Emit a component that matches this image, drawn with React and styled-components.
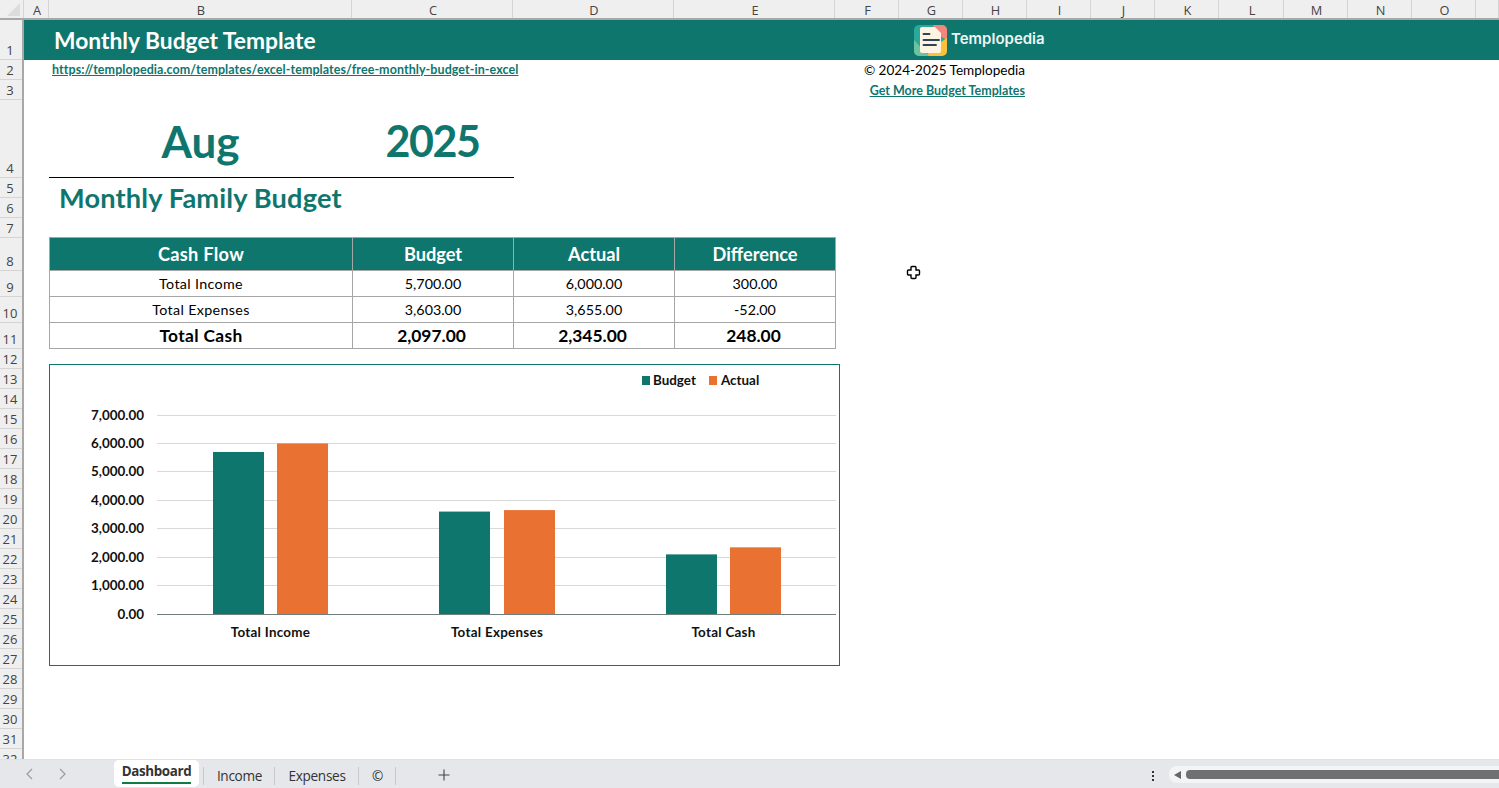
import React from "react";
import styled, { createGlobalStyle } from "styled-components";

const TEAL = "#0f766e";
const ORANGE = "#e97132";
const FONT = `"Lato", "Carlito", "Noto Sans", sans-serif`;

const Global = createGlobalStyle`
  html, body { margin: 0; padding: 0; background: #fff; overflow: hidden; }
  * { box-sizing: border-box; }
`;

const Window = styled.div`
  width: 1499px; height: 788px; display: flex; flex-direction: column;
  overflow: hidden; position: relative; font-family: ${FONT}; color: #000; background: #fff;
`;

/* Column header strip */
const ColBar = styled.div`
  display: flex; height: 20px; flex: none; background: #efefef; border-bottom: 2px solid #a8a8a8;
`;
const Corner = styled.div`
  width: 24px; flex: none; border-right: 1px solid #d4d4d4; position: relative; overflow: hidden;
  &::after {
    content: ""; position: absolute; right: 3px; bottom: 2px; width: 0; height: 0;
    border-style: solid; border-width: 0 0 13px 13px; border-color: transparent transparent #dcdcdc transparent;
  }
`;
const ColCell = styled.div`
  width: ${(p) => p.$w}px; flex: none; border-right: 1px solid #d4d4d4;
  display: flex; align-items: center; justify-content: center;
  font: 400 12.8px "Open Sans", sans-serif; color: #444; padding: 1px 0 0 2px;
`;

const Main = styled.div`
  flex: 1; display: flex; min-height: 0; overflow: hidden;
`;

/* Row header strip */
const RowBar = styled.div`
  width: 24px; flex: none; background: #efefef; border-right: 2px solid #a8a8a8; overflow: hidden;
`;
const RowCell = styled.div`
  height: ${(p) => p.$h}px; border-bottom: 1px solid #d4d4d4;
  display: flex; align-items: flex-end; justify-content: center;
  font: 400 13px "Open Sans", sans-serif; color: #444; line-height: 17px; padding-right: 2px;
`;

/* Sheet */
const Sheet = styled.div`
  flex: 1; display: grid; min-width: 0; align-content: start;
  grid-template-columns: 25px 303px 161px 161px 161px 64px 64px 64px 1fr;
  grid-template-rows: 40px 20px 20px 78px 20px 20px 20px 33px 26px 26px 26px 20px;
`;
const Banner = styled.div`
  grid-column: 1 / -1; grid-row: 1; background: ${TEAL};
`;
const Title = styled.h1`
  grid-column: 2 / span 3; grid-row: 1; margin: 0; padding-left: 5px; align-self: center;
  font: 700 22.8px ${FONT}; color: #fff; white-space: nowrap;
`;
const Logo = styled.div`
  grid-column: 7 / span 3; grid-row: 1; margin-left: 15px; display: flex; align-items: center; gap: 4px;
`;
const LogoText = styled.span`
  font: 600 15px "Inter", sans-serif; color: #eef5f3; letter-spacing: 0; margin-top: -3px;
`;
const UrlLink = styled.a`
  grid-row: 2; grid-column: 2 / span 3; justify-self: start; align-self: center;
  padding: 0 0 2px 3px; white-space: nowrap;
  font: 700 12.5px ${FONT}; letter-spacing: 0.07px; color: ${TEAL}; text-decoration: underline;
`;
const MoreLink = styled.a`
  grid-row: 3; grid-column: 6 / span 3; justify-self: end; align-self: center;
  padding: 0 2px 0 0; white-space: nowrap;
  font: 700 12.5px ${FONT}; color: ${TEAL}; text-decoration: underline;
`;
const Copyright = styled.div`
  grid-column: 6 / span 3; grid-row: 2; justify-self: end; align-self: center; padding: 0 2px 0 0;
  font: 400 13.55px ${FONT}; white-space: nowrap;
`;
const Period = styled.div`
  grid-column: ${(p) => p.$col}; grid-row: 4; justify-self: center; align-self: end;
  font: 700 ${(p) => (p.$digits ? "43px" : "44px")}/64px ${FONT}; color: ${TEAL}; margin-bottom: 5px; white-space: nowrap;
  letter-spacing: ${(p) => (p.$digits ? "-1.4px" : "0")};
`;
const Rule = styled.div`
  grid-column: 2 / span 2; grid-row: 4; align-self: end; height: 1px; background: #000; margin-right: -1px;
`;
const Heading = styled.h2`
  grid-column: 2 / span 3; grid-row: 5 / span 2; margin: 0 0 2px; padding-left: 10px; align-self: center;
  font: 700 27.2px ${FONT}; letter-spacing: 0.15px; color: ${TEAL}; white-space: nowrap;
`;

/* Cash-flow table */
const Table = styled.div`
  grid-column: 2 / span 4; grid-row: 8 / span 4; margin-top: -1px; align-self: start;
  display: grid; grid-template-columns: 303px 161px 161px 161px; grid-template-rows: 33px 26px 26px 26px;
  border-top: 1px solid #a6a6a6; border-left: 1px solid #a6a6a6; width: 787px;
`;
const HeadCell = styled.div`
  background: ${TEAL}; color: #fff; display: flex; align-items: center; justify-content: center;
  font: 700 18.2px ${FONT}; border-right: 1px solid #a6a6a6; border-bottom: 1px solid #a6a6a6;
  letter-spacing: ${(p) => (p.$label ? "0.3px" : "0")};
`;
const Cell = styled.div`
  display: flex; align-items: center; justify-content: center;
  font: 400 14.3px ${FONT};
  letter-spacing: ${(p) => (p.$label ? "0.33px" : "0")};
  border-right: 1px solid #a6a6a6; border-bottom: 1px solid #a6a6a6;
`;
const TotalCell = styled(Cell)`
  font: 700 17.4px ${FONT};
  padding-right: ${(p) => (p.$label ? "0" : "3px")};
`;

/* Chart */
const ChartFrame = styled.div`
  grid-column: 2 / span 5; grid-row: 12; margin-top: 15px; width: 791px; height: 302px;
  border: 1px solid ${TEAL}; background: #fff; align-self: start;
`;
const ChartSvg = styled.svg`
  display: block; width: 789px; height: 300px;
  text { font: 700 13.4px ${FONT}; fill: #111; }
`;
const CategoryLabel = styled.text`
  letter-spacing: 0.28px;
`;

/* Sheet tabs */
const TabBar = styled.div`
  height: 29px; flex: none; background: #e5e7eb; display: flex; align-items: stretch; position: relative;
  border-top: 1px solid #dfe1e5;
`;
const Nav = styled.div`
  width: 114px; flex: none; display: flex; align-items: center; gap: 20px; padding-left: 24px;
`;
const ActiveTab = styled.div`
  width: 85px; flex: none; background: #fff; border-radius: 5px; margin-bottom: 1px; position: relative;
  display: flex; justify-content: center; padding-top: 2px;
  font: 700 13.4px "Open Sans", sans-serif; color: #333; letter-spacing: -0.35px;
  &::after {
    content: ""; position: absolute; left: 8px; right: 8px; bottom: 3px; height: 2px; background: #107c41;
  }
`;
const Tab = styled.div`
  display: flex; align-items: center; justify-content: center; flex: none;
  width: ${(p) => p.$w}px; font: 400 13.6px "Open Sans", sans-serif; color: #333; letter-spacing: -0.3px;
  padding-top: 3px; position: relative;
  &::after {
    content: ""; position: absolute; right: 0; top: 7px; bottom: 3px; width: 1px; background: #c6c8cc;
  }
`;
const Plus = styled.div`
  margin-left: 42px; width: 16px; display: flex; align-items: center; padding-top: 2px;
`;
const BarRight = styled.div`
  margin-left: auto; width: 354px; flex: none; display: flex; align-items: center;
`;
const Dots = styled.div`
  width: 16px; margin-right: 8px; display: flex; flex-direction: column; align-items: center; gap: 2px; padding-top: 3px;
  & i { width: 2px; height: 2px; background: #333; display: block; }
`;
const Track = styled.div`
  flex: 1; height: 17px; margin-top: 1px; background: #f3f4f6; border-radius: 8px 0 0 8px;
  display: flex; align-items: center; padding-left: 5px; gap: 5px;
`;
const ArrowLeft = styled.div`
  width: 0; height: 0; border-style: solid; border-width: 4.5px 7px 4.5px 0;
  border-color: transparent #666 transparent transparent;
`;
const Thumb = styled.div`
  flex: 1; height: 9px; background: #707070; border-radius: 4px 0 0 4px;
`;
const CursorIcon = styled.svg`
  position: absolute; left: 906px; top: 265px; width: 15px; height: 15px;
`;

const columns = [
  ["A", 25], ["B", 303], ["C", 161], ["D", 161], ["E", 161], ["F", 64], ["G", 64], ["H", 64],
  ["I", 64], ["J", 64], ["K", 64], ["L", 65], ["M", 64], ["N", 64], ["O", 64], ["", 23],
];
const rowHeights = { 1: 40, 4: 78, 8: 33, 9: 26, 10: 26, 11: 26 };
const rows = Array.from({ length: 32 }, (_, i) => i + 1);

const flow = [
  ["Total Income", "5,700.00", "6,000.00", "300.00"],
  ["Total Expenses", "3,603.00", "3,655.00", "-52.00"],
];

const Y0 = 249; // baseline of the plot inside the frame's svg
const SCALE = 199 / 7000;
const OX = -50, OY = -365;
const ticks = [7000, 6000, 5000, 4000, 3000, 2000, 1000, 0];
const groups = [
  { name: "Total Income", cx: 270.5, b: 5700, a: 6000, bx: 213, ax: 277 },
  { name: "Total Expenses", cx: 497, b: 3603, a: 3655, bx: 439, ax: 504 },
  { name: "Total Cash", cx: 723.5, b: 2097, a: 2345, bx: 666, ax: 730 },
];
const fmt = (n) => (n === 0 ? "0.00" : n.toLocaleString("en-US") + ".00");

function Chart() {
  return (
    <ChartSvg viewBox="0 0 789 300">
      <rect x={642 + OX} y={376 + OY} width="8" height="9" fill={TEAL} />
      <text x={653 + OX} y={385 + OY}>Budget</text>
      <rect x={709 + OX} y={376 + OY} width="8" height="9" fill={ORANGE} />
      <text x={721 + OX} y={385 + OY}>Actual</text>
      {ticks.map((t) => {
        const y = Y0 - t * SCALE;
        const snapped = Math.floor(y) + 0.5;
        return (
          <g key={t}>
            {t > 0 && <line x1={157 + OX} x2={836 + OX} y1={snapped} y2={snapped} stroke="#d9d9d9" strokeWidth="1" />}
            <text x={144 + OX} y={y + 4.5} textAnchor="end">{fmt(t)}</text>
          </g>
        );
      })}
      {groups.map((g) => (
        <g key={g.name}>
          <rect x={g.bx + OX} y={Y0 - g.b * SCALE} width="51" height={g.b * SCALE} fill={TEAL} />
          <rect x={g.ax + OX} y={Y0 - g.a * SCALE} width="51" height={g.a * SCALE} fill={ORANGE} />
          <CategoryLabel x={g.cx + OX} y={637 + OY} textAnchor="middle">{g.name}</CategoryLabel>
        </g>
      ))}
      <line x1={157 + OX} x2={836 + OX} y1={Y0 + 0.5} y2={Y0 + 0.5} stroke="#6f7f7c" strokeWidth="1" />
    </ChartSvg>
  );
}

function LogoMark() {
  return (
    <svg width="33" height="31" viewBox="0 0 33 31">
      <defs>
        <clipPath id="lg"><rect width="33" height="31" rx="5" /></clipPath>
      </defs>
      <g clipPath="url(#lg)">
        <rect width="33" height="31" fill="#28a99a" />
        <path d="M19 0H33V15L24 10Z" fill="#f4847c" />
        <path d="M33 13V31H11L24 19Z" fill="#fbc13a" />
        <path d="M0 15L15 31H0Z" fill="#6cc3a0" />
      </g>
      <path d="M6 4Q6 2 8 2H21L27 8V26Q27 28 25 28H8Q6 28 6 26Z" fill="#fff4e4" />
      <path d="M9.5 9H15.5M9.5 15H25M9.5 20H22" stroke="#2d4652" strokeWidth="1.9" strokeLinecap="round" />
    </svg>
  );
}

export default function App() {
  return (
    <Window>
      <Global />
      <ColBar>
        <Corner />
        {columns.map(([c, w], i) => <ColCell key={i} $w={w}>{c}</ColCell>)}
      </ColBar>
      <Main>
        <RowBar>
          {rows.map((r) => <RowCell key={r} $h={rowHeights[r] || 20}>{r}</RowCell>)}
        </RowBar>
        <Sheet>
          <Banner />
          <Title>Monthly Budget Template</Title>
          <Logo><LogoMark /><LogoText>Templopedia</LogoText></Logo>
          <UrlLink>https://templopedia.com/templates/excel-templates/free-monthly-budget-in-excel</UrlLink>
          <Copyright>© 2024-2025 Templopedia</Copyright>
          <MoreLink>Get More Budget Templates</MoreLink>
          <Period $col={2}>Aug</Period>
          <Period $col={3} $digits>2025</Period>
          <Rule />
          <Heading>Monthly Family Budget</Heading>
          <Table>
            {["Cash Flow", "Budget", "Actual", "Difference"].map((h, i) => <HeadCell key={h} $label={i === 0}>{h}</HeadCell>)}
            {flow.flat().map((v, i) => <Cell key={i} $label={i % 4 === 0}>{v}</Cell>)}
            {["Total Cash", "2,097.00", "2,345.00", "248.00"].map((v, i) => <TotalCell key={v} $label={i === 0}>{v}</TotalCell>)}
          </Table>
          <ChartFrame><Chart /></ChartFrame>
        </Sheet>
      </Main>
      <TabBar>
        <Nav>
          <svg width="12" height="12" viewBox="0 0 12 12"><path d="M8 1L3 6l5 5" fill="none" stroke="#9a9ca0" strokeWidth="1.2" /></svg>
          <svg width="12" height="12" viewBox="0 0 12 12"><path d="M4 1l5 5-5 5" fill="none" stroke="#9a9ca0" strokeWidth="1.2" /></svg>
        </Nav>
        <ActiveTab>Dashboard</ActiveTab>
        <Tab $w={5} />
        <Tab $w={71}>Income</Tab>
        <Tab $w={84}>Expenses</Tab>
        <Tab $w={37}>©</Tab>
        <Plus>
          <svg width="12" height="12" viewBox="0 0 12 12"><path d="M6 .5v11M.5 6h11" stroke="#444" strokeWidth="1.1" /></svg>
        </Plus>
        <BarRight>
          <Dots><i /><i /><i /></Dots>
          <Track><ArrowLeft /><Thumb /></Track>
        </BarRight>
      </TabBar>
      <CursorIcon viewBox="0 0 15 15">
        <path d="M5 2.5Q5 1.5 6 1.5H9Q10 1.5 10 2.5V5H12.5Q13.5 5 13.5 6V9Q13.5 10 12.5 10H10V12.5Q10 13.5 9 13.5H6Q5 13.5 5 12.5V10H2.5Q1.5 10 1.5 9V6Q1.5 5 2.5 5H5Z" fill="#fff" stroke="#000" strokeWidth="1.4" />
      </CursorIcon>
    </Window>
  );
}
